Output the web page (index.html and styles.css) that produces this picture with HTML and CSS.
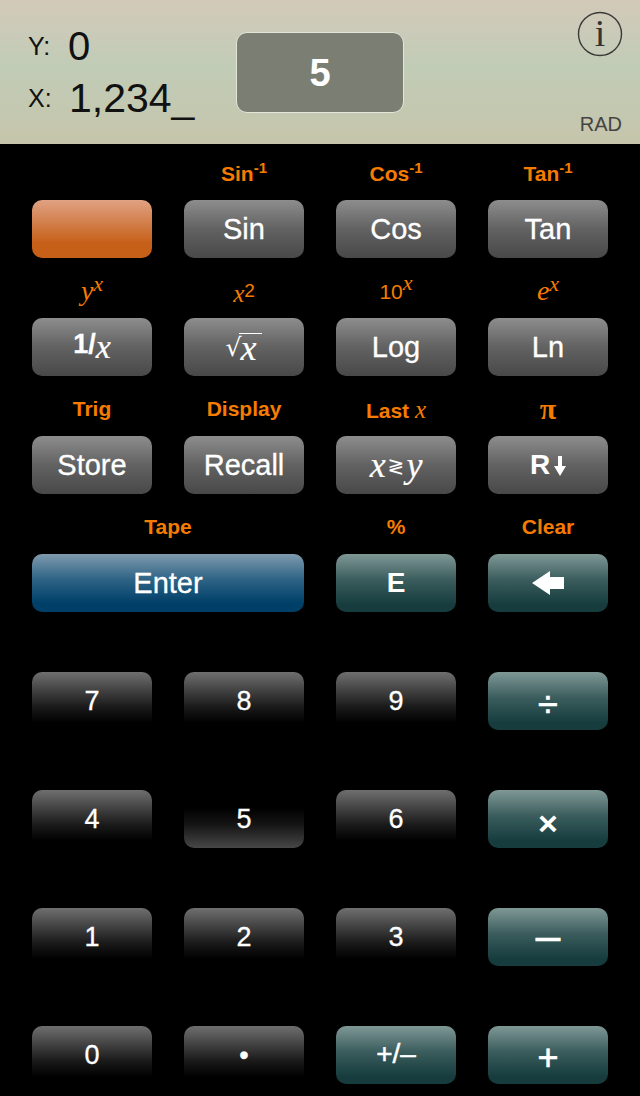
FILE: index.html
```html
<!DOCTYPE html>
<html lang="en">
<head>
  <meta charset="UTF-8" />
  <title>RPN Calculator</title>
  <link rel="stylesheet" href="styles.css">
</head>
<body>
  <div class="display">
    <div class="registers">
      <div class="reg reg-y"><span class="reg-name">Y:</span><span class="reg-value">0</span></div>
      <div class="reg reg-x"><span class="reg-name">X:</span><span class="reg-value x-value">1,234_</span></div>
    </div>
    <div class="pressed-box">5</div>
    <div class="status">
      <svg class="info" width="46" height="46" viewBox="0 0 46 46">
        <circle cx="23" cy="23" r="21.5" fill="none" stroke="#3a3a36" stroke-width="1.4"/>
        <text x="23" y="35" text-anchor="middle" class="info-i">i</text>
      </svg>
      <span class="mode">RAD</span>
    </div>
  </div>

  <div class="keypad">
    <!-- Row 1 -->
    <div class="cell"><div class="alt"></div><button class="key orange"></button></div>
    <div class="cell"><div class="alt first">Sin<sup>-1</sup></div><button class="key grey">Sin</button></div>
    <div class="cell"><div class="alt first">Cos<sup>-1</sup></div><button class="key grey">Cos</button></div>
    <div class="cell"><div class="alt first">Tan<sup>-1</sup></div><button class="key grey">Tan</button></div>

    <!-- Row 2 -->
    <div class="cell"><div class="alt math"><i>y</i><sup><i>x</i></sup></div><button class="key grey"><span class="one">1/</span><i class="mi mi-small">x</i></button></div>
    <div class="cell"><div class="alt math small"><i>x</i><span class="sans-sup">2</span></div><button class="key grey"><span class="radical">√</span><i class="mi vinculum">x</i></button></div>
    <div class="cell"><div class="alt math small"><span class="sans-plain">10</span><sup><i>x</i></sup></div><button class="key grey">Log</button></div>
    <div class="cell"><div class="alt math"><i>e</i><sup><i>x</i></sup></div><button class="key grey">Ln</button></div>

    <!-- Row 3 -->
    <div class="cell"><div class="alt">Trig</div><button class="key grey">Store</button></div>
    <div class="cell"><div class="alt">Display</div><button class="key grey">Recall</button></div>
    <div class="cell"><div class="alt first">Last <i class="serif-x">x</i></div><button class="key grey"><i class="mi">x</i><span class="swap">≷</span><i class="mi">y</i></button></div>
    <div class="cell"><div class="alt math pi">π</div><button class="key grey"><span class="bold-key">R</span><svg class="down" width="12" height="20" viewBox="0 0 12 20"><path d="M4 0h4v10h4L6 20 0 10h4z" fill="#fff"/></svg></button></div>

    <!-- Row 4 -->
    <div class="cell wide"><div class="alt">Tape</div><button class="key blue">Enter</button></div>
    <div class="cell"><div class="alt">%</div><button class="key teal"><span class="bold-key">E</span></button></div>
    <div class="cell"><div class="alt">Clear</div><button class="key teal"><svg width="32" height="24" viewBox="0 0 32 24"><path d="M0 12 18 0v6h14v12H18v6z" fill="#fff"/></svg></button></div>

    <!-- Digits -->
    <div class="cell"><button class="key digit">7</button></div>
    <div class="cell"><button class="key digit">8</button></div>
    <div class="cell"><button class="key digit">9</button></div>
    <div class="cell"><button class="key teal op op-div">÷</button></div>

    <div class="cell"><button class="key digit">4</button></div>
    <div class="cell"><button class="key digit pressed">5</button></div>
    <div class="cell"><button class="key digit">6</button></div>
    <div class="cell"><button class="key teal op op-mul">×</button></div>

    <div class="cell"><button class="key digit">1</button></div>
    <div class="cell"><button class="key digit">2</button></div>
    <div class="cell"><button class="key digit">3</button></div>
    <div class="cell"><button class="key teal op op-min">–</button></div>

    <div class="cell"><button class="key digit">0</button></div>
    <div class="cell"><button class="key digit">•</button></div>
    <div class="cell"><button class="key teal sign">+/–</button></div>
    <div class="cell"><button class="key teal op op-add">+</button></div>
  </div>
</body>
</html>
```

FILE: styles.css
```css
* {
  box-sizing: border-box;
  margin: 0;
  padding: 0;
}

body {
  width: 640px;
  height: 1096px;
  overflow: hidden;
  background: #000;
  font-family: "Liberation Sans", Arial, sans-serif;
}

/* top display */
.display {
  display: flex;
  height: 144px;
  padding: 10px 18px 8px 28px;
  background: linear-gradient(#d3c9b9 0%, #c1ccb7 45%, #c6c5ab 100%);
  color: #111;
}

.registers {
  width: 208px;
  padding-top: 10px;
}

.reg {
  display: flex;
  align-items: center;
  height: 52px;
}

.reg-name {
  font-size: 25px;
  width: 40px;
}

.reg-value {
  font-size: 40px;
}

.x-value {
  font-size: 41px;
  margin-left: 1px;
}

.pressed-box {
  width: 168px;
  height: 81px;
  margin-top: 22px;
  border: 1px solid #e4e6da;
  border-radius: 11px;
  background: #7b7f73;
  color: #fff;
  font-size: 38px;
  font-weight: bold;
  line-height: 81px;
  text-align: center;
}

.status {
  display: flex;
  flex-direction: column;
  align-items: flex-end;
  justify-content: space-between;
  margin-left: auto;
}

.info {
  display: block;
  margin-right: -1px;
  margin-top: 1px;
}

.info-i {
  font-family: "Liberation Serif", serif;
  font-size: 38px;
  fill: #333;
}

.mode {
  font-size: 20px;
  color: #444;
  line-height: 24px;
}

/* keys */
.keypad {
  display: grid;
  grid-template-columns: repeat(4, 120px);
  grid-auto-rows: 118px;
  column-gap: 32px;
  padding-left: 32px;
}

.cell {
  display: flex;
  flex-direction: column;
  justify-content: flex-end;
  height: 114px;
}

.wide {
  grid-column: span 2;
}

.alt {
  height: 56px;
  padding-top: 16px;
  color: #f57c00;
  font-size: 21px;
  font-weight: bold;
  line-height: 26px;
  text-align: center;
  white-space: nowrap;
}

.alt.first {
  padding-top: 17px;
}

.alt sup {
  font-size: 15px;
  line-height: 0;
  vertical-align: 8px;
}

.math {
  font-family: "Liberation Serif", serif;
  font-size: 28px;
  font-weight: normal;
}

.math sup {
  font-size: 22px;
  vertical-align: 9px;
}

.math.small {
  font-size: 25px;
}

.pi {
  font-size: 30px;
  font-weight: bold;
}

.sans-plain {
  font-family: "Liberation Sans", sans-serif;
  font-size: 21px;
}

.sans-sup {
  font-family: "Liberation Sans", sans-serif;
  font-size: 19px;
  vertical-align: 5px;
}

.serif-x {
  font-family: "Liberation Serif", serif;
  font-size: 25px;
  font-weight: normal;
}

.key {
  display: flex;
  align-items: center;
  justify-content: center;
  width: 100%;
  height: 58px;
  flex: none;
  border: none;
  border-radius: 10px;
  color: #fff;
  font-family: inherit;
  font-size: 29px;
  -webkit-text-stroke: 0.3px #fff;
}

.bold-key {
  font-size: 28px;
  font-weight: bold;
  -webkit-text-stroke: 0;
}

.grey {
  background: linear-gradient(#8d8d8d, #626262 50%, #484848);
}

.orange {
  background: linear-gradient(#e0a283, #c65f17 75%);
}

.blue {
  background: linear-gradient(#7f9aad, #2c6285 45%, #003f68 85%);
}

.teal {
  background: linear-gradient(#7f9896, #3a5c5c 45%, #163c3e 88%);
}

.digit {
  font-size: 27px;
  background: linear-gradient(#6f6f6f, #1a1a1a 60%, #000 88%);
}

.digit.pressed {
  background: linear-gradient(#000 30%, #151515 60%, #474747);
}

.op {
  font-size: 36px;
  -webkit-text-stroke: 0.7px #fff;
}

.op-div {
  padding-top: 8px;
}

.op-mul {
  font-size: 34px;
  font-weight: bold;
  padding-top: 8px;
  -webkit-text-stroke: 0;
}

.op-min {
  font-size: 44px;
  padding-bottom: 2px;
}

.op-add {
  padding-top: 6px;
}

.sign {
  font-size: 28px;
  padding-bottom: 2px;
  -webkit-text-stroke: 0.5px #fff;
}

.mi {
  font-family: "Liberation Serif", serif;
  font-size: 36px;
  line-height: 1;
  -webkit-text-stroke: 0.2px #fff;
}

.mi-small {
  font-size: 34px;
}

.one {
  font-weight: bold;
  font-size: 27px;
  padding-bottom: 6px;
}

.radical {
  font-family: "DejaVu Sans", sans-serif;
  font-size: 25px;
  -webkit-text-stroke: 0;
}

.vinculum {
  border-top: 1.5px solid #fff;
  padding: 0 6px 0 1px;
  line-height: 28px;
  margin-left: -2px;
}

.swap {
  margin: 2px 2px 0;
  font-family: "DejaVu Sans", sans-serif;
  font-size: 20px;
  -webkit-text-stroke: 0;
}

.down {
  margin-left: 4px;
  margin-top: 2px;
}
```
